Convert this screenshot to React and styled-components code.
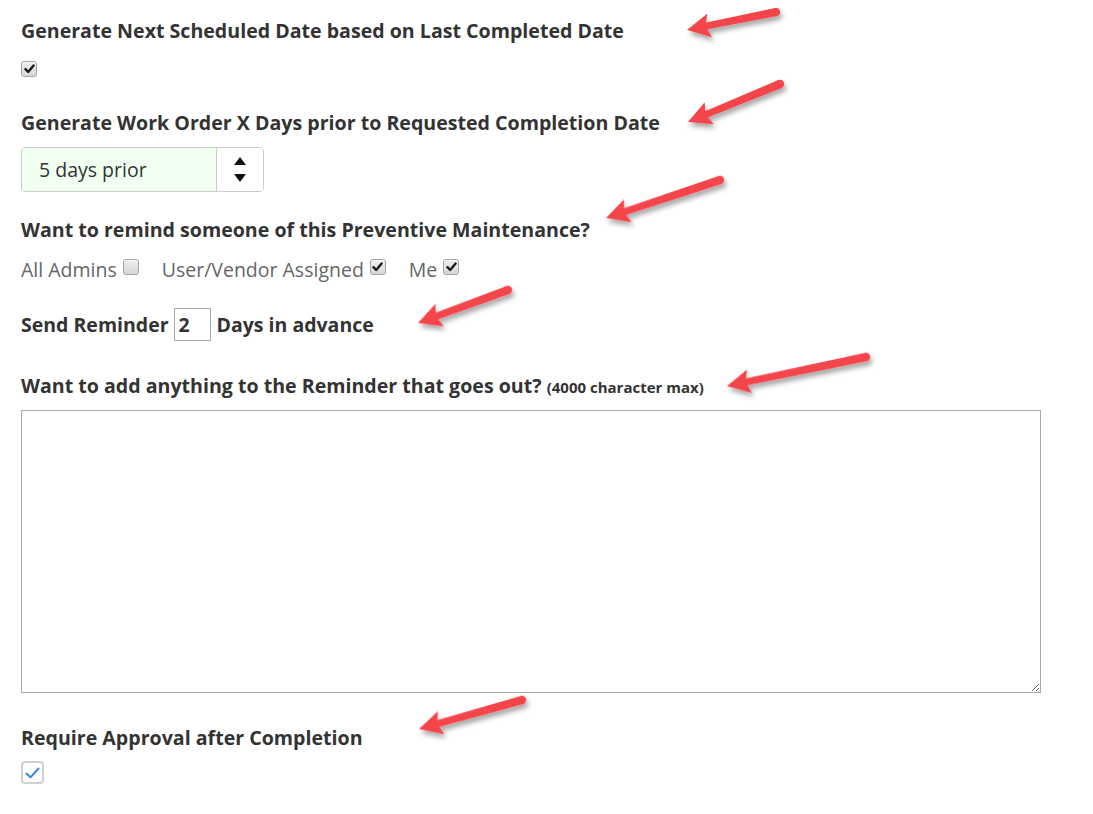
import React from 'react';
import styled, { createGlobalStyle } from 'styled-components';

const GlobalStyle = createGlobalStyle`
  html, body {
    margin: 0;
    background: #fff;
  }
  body {
    font-family: "Open Sans", "Liberation Sans", sans-serif;
    color: #333;
  }
`;

const Page = styled.div`
  position: relative;
  padding: 18px 21px 30px;
  width: 1093px;
  min-height: 814px;
  box-sizing: border-box;
`;

const Heading = styled.div`
  font-size: 19.6px;
  font-weight: 700;
  line-height: 26px;
  color: #333;
  margin-top: ${p => p.$gap || 0}px;
`;

const Small = styled.span`
  font-size: 15px;
`;

const Spinner = styled.div`
  display: flex;
  width: 243px;
  height: 45px;
  margin-top: 11px;
  border: 1px solid #ccc;
  border-radius: 4px;
  box-sizing: border-box;
  overflow: hidden;
`;

const SpinnerValue = styled.div`
  flex: 1;
  display: flex;
  align-items: center;
  padding-left: 17px;
  background: #f0fff0;
  font-size: 19.5px;
  color: #333;
`;

const SpinnerButtons = styled.div`
  width: 46px;
  border-left: 1px solid #ccc;
  background: #fff;
  display: flex;
  flex-direction: column;
  align-items: center;
  justify-content: center;
  gap: 9px;
`;

const Triangle = styled.span`
  width: 0;
  height: 0;
  border-left: 6px solid transparent;
  border-right: 6px solid transparent;
  ${p => (p.$down ? 'border-top: 8px solid #111;' : 'border-bottom: 8px solid #111;')}
`;

const OptionRow = styled.div`
  display: flex;
  align-items: flex-start;
  margin-top: 14px;
  height: 26px;
`;

const Option = styled.label`
  display: flex;
  align-items: flex-start;
  margin-right: 23px;
  font-size: 19.5px;
  line-height: 26px;
  color: #666;
`;

const LegacyBox = styled.span`
  display: flex;
  flex-shrink: 0;
  align-items: center;
  justify-content: center;
  width: 16px;
  height: 16px;
  box-sizing: border-box;
  margin-left: ${p => p.$inline ? 6 : 0}px;
  margin-top: ${p => p.$top || 0}px;
  border: 1px solid #a4a4a4;
  border-radius: 3px;
  background: linear-gradient(#eeeeee, #d6d6d6);
  box-shadow: inset 0 1px 1px rgba(255, 255, 255, 0.8);
`;

const ModernBox = styled.span`
  display: flex;
  align-items: center;
  justify-content: center;
  width: 23px;
  height: 23px;
  box-sizing: border-box;
  margin-top: 10px;
  border: 2px solid #d0d0d0;
  border-radius: 4px;
  background: #fff;
`;

const SendRow = styled.div`
  display: flex;
  align-items: center;
  margin-top: 25px;
  font-size: 19.5px;
  font-weight: 700;
  color: #333;
`;

const DaysInput = styled.input`
  width: 37px;
  height: 33px;
  box-sizing: border-box;
  margin: 0 6px 0 5px;
  padding: 0 4px;
  border: 1px solid #aaa;
  border-radius: 0;
  font-family: inherit;
  font-size: 19.5px;
  font-weight: 700;
  color: #333;
  outline: none;
`;

const Notes = styled.textarea`
  display: block;
  width: 1020px;
  height: 283px;
  margin-top: 10px;
  box-sizing: border-box;
  border: 1px solid #aaa;
  border-radius: 0;
  resize: vertical;
  font-family: inherit;
  font-size: 14px;
  outline: none;
`;

const Overlay = styled.svg`
  position: absolute;
  left: 0;
  top: 0;
  width: 100%;
  height: 100%;
  pointer-events: none;
`;

const LegacyCheck = ({ checked, inline, top }) => (
  <LegacyBox $inline={inline} $top={top}>
    {checked && (
      <svg width="11" height="10" viewBox="0 0 11 10">
        <path d="M1.5 5.2 L4.2 8 L9.6 1.6" fill="none" stroke="#1a1a1a" strokeWidth="2.4" strokeLinecap="round" strokeLinejoin="round" />
      </svg>
    )}
  </LegacyBox>
);

const arrows = [
  [776, 12, 687, 30],
  [780, 84, 688, 122],
  [720, 180, 606, 218],
  [508, 290, 418, 323],
  [866, 357, 727, 386],
  [522, 700, 419, 729],
];

const Arrow = ({ tail }) => {
  const [tx, ty, hx, hy] = tail;
  const dx = tx - hx;
  const dy = ty - hy;
  const len = Math.sqrt(dx * dx + dy * dy);
  const angle = (Math.atan2(dy, dx) * 180) / Math.PI;
  return (
    <g transform={`translate(${hx} ${hy}) rotate(${angle})`}>
      <path d={`M18 -3.4 L${len} -4.2 L${len} 4.2 L18 3.4 Z`} fill="#f4454b" />
      <circle cx={len} cy="0" r="4.2" fill="#f4454b" />
      <path d="M0 0 L23 -12 L19 0 L23 12 Z" fill="#f4454b" />
    </g>
  );
};

export default function App() {
  return (
    <Page>
      <GlobalStyle />
      <Heading>Generate Next Scheduled Date based on Last Completed Date</Heading>
      <LegacyCheck checked top={17} />

      <Heading $gap={33}>Generate Work Order X Days prior to Requested Completion Date</Heading>
      <Spinner>
        <SpinnerValue>5 days prior</SpinnerValue>
        <SpinnerButtons>
          <Triangle />
          <Triangle $down />
        </SpinnerButtons>
      </Spinner>

      <Heading $gap={25}>Want to remind someone of this Preventive Maintenance?</Heading>
      <OptionRow>
        <Option>All Admins<LegacyCheck inline top={2} /></Option>
        <Option>User/Vendor Assigned<LegacyCheck checked inline top={2} /></Option>
        <Option>Me<LegacyCheck checked inline top={2} /></Option>
      </OptionRow>

      <SendRow>
        Send Reminder
        <DaysInput defaultValue="2" />
        Days in advance
      </SendRow>

      <Heading $gap={32}>
        Want to add anything to the Reminder that goes out? <Small>(4000 character max)</Small>
      </Heading>
      <Notes />

      <Heading $gap={32}>Require Approval after Completion</Heading>
      <ModernBox>
        <svg width="15" height="12" viewBox="0 0 15 12">
          <path d="M1.5 6.5 L5.5 10.3 L13.5 1.5" fill="none" stroke="#3b86d6" strokeWidth="2" strokeLinecap="round" strokeLinejoin="round" />
        </svg>
      </ModernBox>

      <Overlay>
        <defs>
          <filter id="arrowShadow" x="-20%" y="-50%" width="140%" height="200%">
            <feDropShadow dx="2" dy="4" stdDeviation="2.5" floodColor="#000" floodOpacity="0.35" />
          </filter>
        </defs>
        <g filter="url(#arrowShadow)">
          {arrows.map((a, i) => (
            <Arrow key={i} tail={a} />
          ))}
        </g>
      </Overlay>
    </Page>
  );
}
